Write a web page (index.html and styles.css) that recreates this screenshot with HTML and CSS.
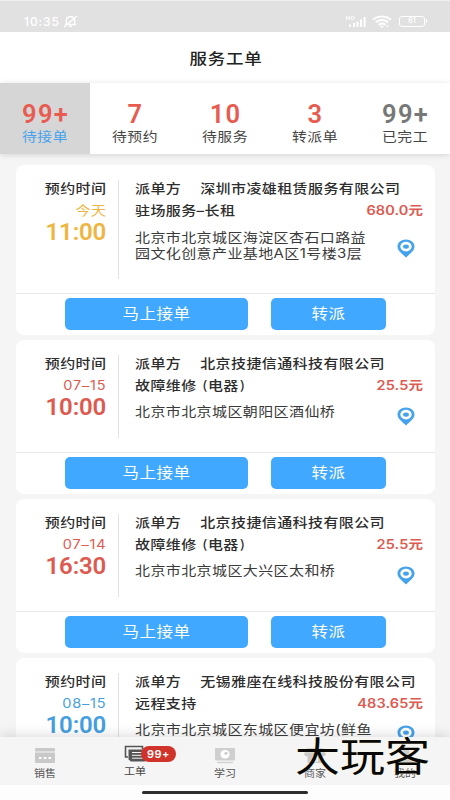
FILE: index.html
```html
<!DOCTYPE html>
<html lang="zh-CN">
<head>
<meta charset="utf-8">
<title>服务工单</title>
<link rel="stylesheet" href="styles.css">
</head>
<body>
<svg class="defs" width="0" height="0"><symbol id="pin" viewBox="0 0 18 19"><path d="M9 .5C4.200.5.5 3.500.5 7.600.5 12 5 14.500 9 18.500c4-4 8.500-6.500 8.500-10.900C17.500 3.500 13.800.5 9 .5z" fill="#45a2ed"/><ellipse cx="9" cy="7.600" rx="5.700" ry="4.800" fill="#fff"/><ellipse cx="9" cy="7.600" rx="2.900" ry="2.200" fill="#45a2ed"/></symbol></svg>
<div class="app">
  <div class="status">
    <span class="clock">10:35</span>
    <svg class="mute" width="15" height="13" viewBox="0 0 15 13" fill="none" stroke="#fff" stroke-width="1.3"><path d="M2 9.5h11M3.3 9V5.5Q3.5 1.7 7.5 1.5Q11.6 1.7 11.7 5.5V9.3M6 11.3h3M1 12L14 1"/></svg>
    <svg class="signal" width="21" height="13" viewBox="0 0 21 13"><g fill="#fff"><path d="M3 9.5h2v2.5H3zM7 8h2v4H7zM10.5 6.5h2V12h-2zM14 4.5h2V12h-2zM17.6 2h2V12h-2z"/></g><path d="M.6 1v4M3.4 1v4M.6 3h3M5.6 1.5v3h1q2-.2 2-1.5t-2-1.5z" fill="none" stroke="#fff" stroke-width=".9"/></svg>
    <svg class="wifi" width="20" height="13" viewBox="0 0 20 13" fill="none" stroke="#fff" stroke-width="1.9"><path d="M1 4.6Q10-1.8 19 4.6M3.8 7.3Q10 2.8 16.2 7.3M6.5 9.7Q10 7.2 13.5 9.7"/><path d="M8.5 11.2h3L10 12.5zM14 11h3" stroke-width="1"/></svg>
    <span class="battery">61</span>
  </div>
  <div class="title"><span>服务工单</span></div>
  <div class="tabs">
    <div class="tab active"><b>99+</b><span>待接单</span></div>
    <div class="tab"><b>7</b><span>待预约</span></div>
    <div class="tab"><b>10</b><span>待服务</span></div>
    <div class="tab"><b>3</b><span>转派单</span></div>
    <div class="tab done"><b>99+</b><span>已完工</span></div>
  </div>
  <div class="list">
    <div class="card tall">
      <div class="info">
        <div class="when yellow"><span class="t strong">预约时间</span><span class="t day">今天</span><b>11:00</b></div>
        <div class="detail">
          <div class="row"><span class="t strong from">派单方</span><span class="t strong">深圳市凌雄租赁服务有限公司</span></div>
          <div class="row"><span class="t strong">驻场服务–长租</span><span class="price">680.0元</span></div>
          <div class="place"><div class="t addr">北京市北京城区海淀区杏石口路益<br>园文化创意产业基地A区1号楼3层</div><svg class="pin"><use href="#pin"/></svg></div>
        </div>
      </div>
      <div class="actions"><div class="btn main"><span>马上接单</span></div><div class="btn"><span>转派</span></div></div>
    </div>
    <div class="card">
      <div class="info">
        <div class="when red"><span class="t strong">预约时间</span><span class="t day num">07–15</span><b>10:00</b></div>
        <div class="detail">
          <div class="row"><span class="t strong from">派单方</span><span class="t strong">北京技捷信通科技有限公司</span></div>
          <div class="row"><span class="t strong">故障维修 <i class="paren">(</i>电器<i class="paren">)</i></span><span class="price">25.5元</span></div>
          <div class="place"><div class="t addr">北京市北京城区朝阳区酒仙桥</div><svg class="pin"><use href="#pin"/></svg></div>
        </div>
      </div>
      <div class="actions"><div class="btn main"><span>马上接单</span></div><div class="btn"><span>转派</span></div></div>
    </div>
    <div class="card">
      <div class="info">
        <div class="when red"><span class="t strong">预约时间</span><span class="t day num">07–14</span><b>16:30</b></div>
        <div class="detail">
          <div class="row"><span class="t strong from">派单方</span><span class="t strong">北京技捷信通科技有限公司</span></div>
          <div class="row"><span class="t strong">故障维修 <i class="paren">(</i>电器<i class="paren">)</i></span><span class="price">25.5元</span></div>
          <div class="place"><div class="t addr">北京市北京城区大兴区太和桥</div><svg class="pin"><use href="#pin"/></svg></div>
        </div>
      </div>
      <div class="actions"><div class="btn main"><span>马上接单</span></div><div class="btn"><span>转派</span></div></div>
    </div>
    <div class="card">
      <div class="info">
        <div class="when blue"><span class="t strong">预约时间</span><span class="t day num">08–15</span><b>10:00</b></div>
        <div class="detail">
          <div class="row"><span class="t strong from">派单方</span><span class="t strong">无锡雅座在线科技股份有限公司</span></div>
          <div class="row"><span class="t strong">远程支持</span><span class="price">483.65元</span></div>
          <div class="place"><div class="t addr">北京市北京城区东城区便宜坊(鲜鱼</div><svg class="pin"><use href="#pin"/></svg></div>
        </div>
      </div>
    </div>
  </div>
  <div class="nav">
    <div class="item"><svg width="22" height="17" viewBox="0 0 22 17"><path d="M2 1h18q1 0 1 1v2.500H1V2q0-1 1-1zM1 5.500h20V15q0 1-1 1H2q-1 0-1-1z" fill="#c9c9c9"/><path d="M5 10h2.500v2H5zM9.800 10h2.500v2H9.800zM14.500 10H17v2h-2.500z" fill="#fff"/></svg><span>销售</span></div>
    <div class="item current"><svg width="22" height="18" viewBox="0 0 22 18"><path d="M4 12H1.500V1.500h17V4" fill="none" stroke="#555" stroke-width="1.600"/><path d="M4.500 4.500H21V16.500H7l-2.500-2z" fill="#555"/><path d="M8 7.500h11M8 10.300h11M8 13.200h11" stroke="#f5f5f5" stroke-width="1"/></svg><em>99+</em><span>工单</span></div>
    <div class="item"><svg width="22" height="17" viewBox="0 0 22 17"><rect x="1" y="1" width="20" height="12.500" rx="1" fill="#cfcfcf"/><ellipse cx="11" cy="7.200" rx="4.600" ry="4.200" fill="#fff"/><ellipse cx="12" cy="6.200" rx="1.700" ry="1.500" fill="#cfcfcf"/><path d="M3 15.500h16" stroke="#cfcfcf" stroke-width="1.300"/></svg><span>学习</span></div>
    <div class="item"><svg width="24" height="17" viewBox="0 0 24 17"><path d="M4 1h16l3 6q-1 2.500-3.500 2.500V16h-15V9.500Q2 9.500 1 7z" fill="#c9c9c9"/><path d="M9 10h6v5H9z" fill="#eee"/></svg><span>商家</span></div>
    <div class="item"><svg width="22" height="17" viewBox="0 0 22 17"><ellipse cx="11" cy="5" rx="4.500" ry="4" fill="#c9c9c9"/><path d="M2 16q1-6 9-6t9 6z" fill="#c9c9c9"/></svg><span>我的</span></div>
    <div class="watermark">大玩客</div>
  </div>
  <div class="gesture"><i></i></div>
</div>
</body>
</html>
```
FILE: styles.css
```css
* { box-sizing: border-box; }
body { margin: 0; font-family: Inter, "Noto Sans CJK SC", sans-serif; color: #333; }
.defs { position: absolute; }
.app { width: 450px; height: 800px; display: flex; flex-direction: column; overflow: hidden; background: #f5f5f5; }
.status { height: 32px; flex: none; background: #e1e1e1; border-top: 1px solid #f0f0f0; display: flex; align-items: center; padding: 10px 25px 0 24px; color: #fff; }
.clock { font-size: 12px; font-weight: 500; letter-spacing: .9px; width: 39px; }
.signal { margin-left: auto; }
.wifi { margin-left: 5px; }
.battery { position: relative; width: 26px; height: 11px; margin-left: 7px; border: 1.500px solid #fff; border-radius: 3px; font-size: 7px; line-height: 8px; text-align: center; font-weight: 600; }
.battery::after { content: ""; position: absolute; right: -3px; top: 2px; width: 1px; height: 4px; background: #fff; }
.title { height: 51px; flex: none; background: #fff; display: flex; align-items: center; justify-content: center; font-size: 17.500px; font-weight: 500; letter-spacing: .8px; color: #222; padding-left: 2px; }
.title span { transform: scaleY(.86); }
.tabs { height: 71px; flex: none; display: grid; grid-template-columns: repeat(5, 90px); background: #fff; box-shadow: 0 1px 6px #0002; position: relative; z-index: 1; }
.tab { display: flex; flex-direction: column; align-items: center; padding-top: 17px; color: #444; }
.tab b { font: 600 25.500px/28px Roboto, sans-serif; letter-spacing: 1.200px; margin-right: -1px; color: #e75b50; }
.tab span { font-size: 14.800px; line-height: 18px; letter-spacing: .5px; transform: scaleY(.87); }
.tab.active { background: #d6d6d6; }
.tab.active span { color: #45a2ed; }
.tab.done b { color: #777; }
.list { height: 583px; flex: none; padding: 11px 15px 0 16px; display: flex; flex-direction: column; gap: 4.500px; overflow: hidden; }
.card { height: 154.500px; flex: none; background: #fff; border-radius: 8px; display: flex; flex-direction: column; }
.card.tall { height: 170px; }
.info { flex: 1; display: flex; padding: 15px 12px 14px 0; }
.when { width: 103px; border-right: 1px solid #e2e2e2; padding-right: 12px; display: flex; flex-direction: column; align-items: flex-end; }
.t { font-size: 15px; line-height: 18px; letter-spacing: .4px; transform: scaleY(.86); white-space: nowrap; }
.strong { font-weight: 500; color: #2d2d2d; }
.when .t { margin-right: -.4px; }
.when .day { margin-top: 4px; color: inherit; }
.when .day.num { font-size: 14.500px; letter-spacing: .8px; }
.when b { font: 600 24px/24px Roboto, sans-serif; letter-spacing: -.2px; }
.yellow { color: #eeb640; }
.red { color: #dd5a50; }
.blue { color: #459fdf; }
.detail { flex: 1; padding-left: 16px; display: flex; flex-direction: column; }
.row { display: flex; height: 18px; margin-bottom: 4px; }
.from { margin-right: 19px; }
.paren { font-style: normal; font-weight: 400; margin-left: 1px; }
.price { margin-left: auto; color: #dd5a50; font-size: 14.500px; line-height: 18px; font-weight: 600; letter-spacing: .1px; transform: scaleY(.86); }
.place { display: flex; justify-content: space-between; }
.addr { line-height: 19px; margin-top: 3.500px; color: #3a3a3a; transform-origin: 0 9px; }
.pin { width: 18px; height: 19px; margin: 8px 8px 0 0; flex: none; }
.tall .pin { margin-top: 15px; }
.actions { height: 42px; border-top: 1px solid #e9e9e9; display: flex; gap: 23px; padding: 4px 0 0 49px; }
.btn { width: 115px; height: 32px; border-radius: 5px; background: #41a8ff; color: #fff; font-size: 16.500px; line-height: 32px; letter-spacing: .5px; text-align: center; }
.btn.main { width: 183px; }
.btn span { display: inline-block; transform: scaleY(.88); }
.nav { height: 48px; flex: none; display: grid; grid-template-columns: repeat(5, 90px); background: #f5f5f5; box-shadow: 0 -2px 12px #0002; position: relative; z-index: 1; }
.item { position: relative; display: flex; flex-direction: column; align-items: center; padding-top: 10px; color: #555; font-size: 11px; line-height: 14px; }
.item svg { margin-bottom: 2px; }
.item > span { transform: scaleY(.88); }
.current { padding-top: 8px; color: #444; }
.current svg { margin-bottom: 1px; }
.item em { position: absolute; left: 51px; top: 9px; width: 35px; height: 16px; border-radius: 8px; background: #d0332a; color: #fff; font-size: 11px; line-height: 16px; font-weight: 600; font-style: normal; text-align: center; letter-spacing: .5px; }
.watermark { position: absolute; left: 295px; top: -3px; font-size: 45px; line-height: 46px; font-weight: 400; color: #080808; white-space: nowrap; transform: scaleY(.88); text-shadow: 0 0 2px #fff8d0; }
.gesture { height: 15px; flex: none; background: #fdfdfd; display: flex; justify-content: center; padding-top: 6px; position: relative; z-index: 1; }
.gesture i { width: 166px; height: 3px; border-radius: 2px; background: #2b2d2d; }
```
